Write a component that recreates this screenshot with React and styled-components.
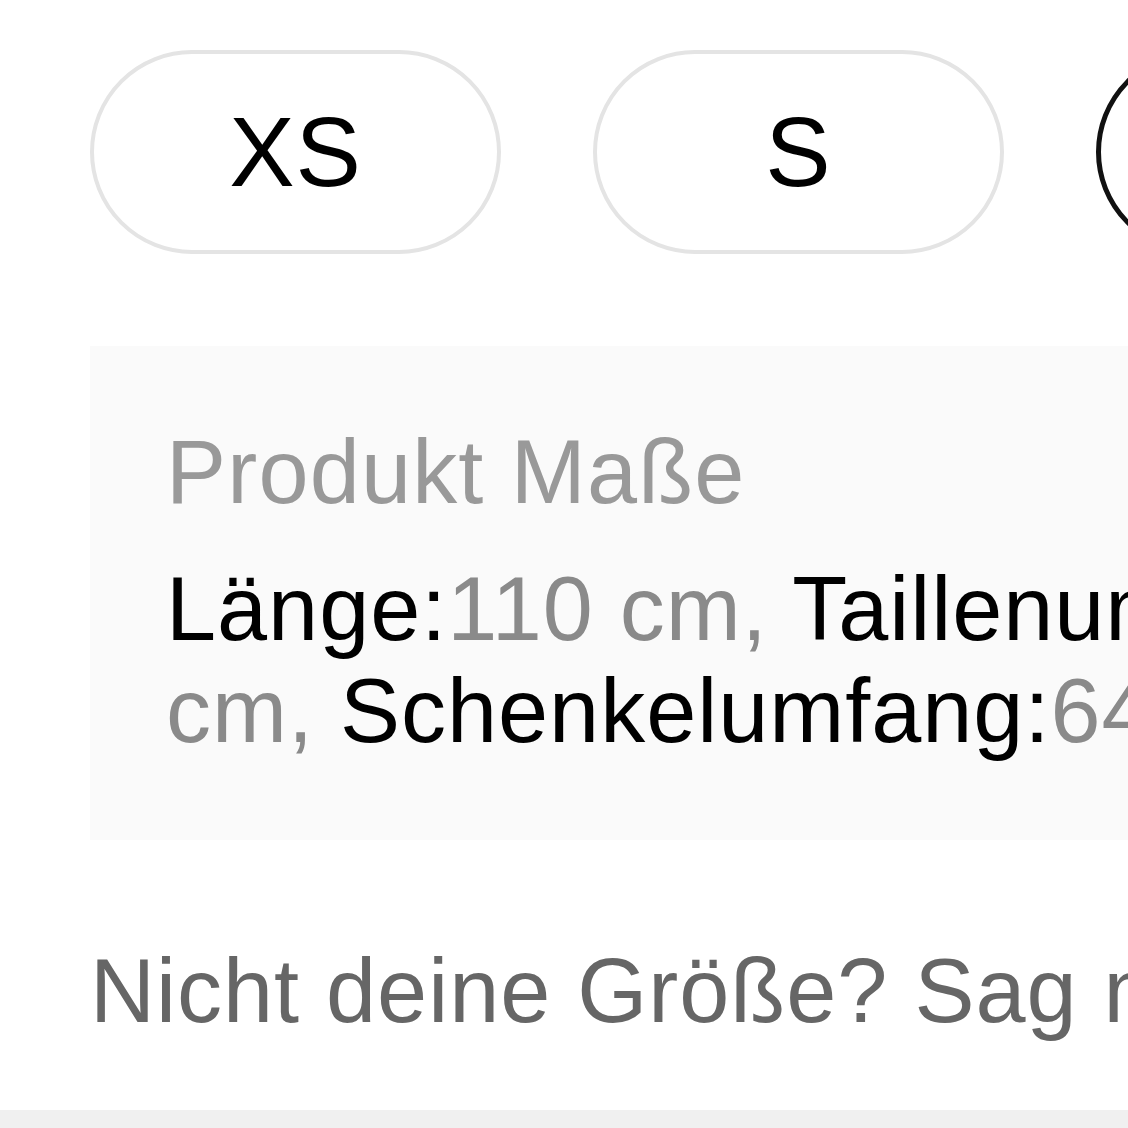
import React from "react";
import styled, { createGlobalStyle } from "styled-components";

const Global = createGlobalStyle`
  html, body {
    margin: 0;
    padding: 0;
    background: #ffffff;
    overflow: hidden;
    width: 1128px;
    height: 1128px;
  }
  body {
    font-family: "Liberation Sans", Arial, Helvetica, sans-serif;
    -webkit-font-smoothing: antialiased;
  }
`;

const Page = styled.div`
  display: flex;
  flex-direction: column;
  width: 1128px;
  height: 1128px;
  overflow: hidden;
`;

const Content = styled.div`
  display: flex;
  flex-direction: column;
  padding: 50px 0 0 90px;
`;

const SizeRow = styled.div`
  display: flex;
  gap: 92px;
`;

const SizePill = styled.button`
  flex: 0 0 auto;
  box-sizing: border-box;
  width: 411px;
  height: 204px;
  border-radius: 102px;
  border: ${(p) => (p.$selected ? "5px solid #111111" : "4px solid #e4e4e4")};
  background: #ffffff;
  color: #000000;
  font-family: "Liberation Sans", Arial, sans-serif;
  font-size: 98px;
  letter-spacing: 1px;
  line-height: 1;
  display: flex;
  align-items: center;
  justify-content: center;
  padding: 0;
`;

const MeasureBox = styled.div`
  box-sizing: border-box;
  flex: 0 0 auto;
  width: 1552px;
  margin-top: 92px;
  padding: 75px 76px 78px 76px;
  background: #fafafa;
  display: flex;
  flex-direction: column;
  gap: 35px;
`;

const BoxTitle = styled.div`
  font-size: 90px;
  line-height: 102px;
  letter-spacing: 1.2px;
  color: #999999;
`;

const MeasureText = styled.div`
  font-size: 90px;
  line-height: 102px;
  letter-spacing: 1px;
  color: #000000;
`;

const Value = styled.span`
  color: #8a8a8a;
`;

const Hint = styled.div`
  margin-top: 100px;
  font-size: 90px;
  line-height: 102px;
  letter-spacing: 1px;
  color: #666666;
  white-space: nowrap;
`;

const BottomBar = styled.div`
  margin-top: 68px;
  height: 60px;
  background: #f0f0f0;
  flex: 0 0 auto;
`;

const sizes = ["XS", "S", "M", "L", "XL"];
const measures = [
  ["Länge:", "110 cm, "],
  ["Taillenumfang:", "70 cm, "],
  ["Schenkelumfang:", "64 cm"],
];

export default function App() {
  return (
    <Page>
      <Global />
      <Content>
        <SizeRow>
          {sizes.map((s) => (
            <SizePill key={s} $selected={s === "M"}>
              {s}
            </SizePill>
          ))}
        </SizeRow>
        <MeasureBox>
          <BoxTitle>Produkt Maße</BoxTitle>
          <MeasureText>
            {measures.map(([label, value]) => (
              <React.Fragment key={label}>
                {label}
                <Value>{value}</Value>
              </React.Fragment>
            ))}
          </MeasureText>
        </MeasureBox>
        <Hint>Nicht deine Größe? Sag mir Bescheid</Hint>
      </Content>
      <BottomBar />
    </Page>
  );
}
